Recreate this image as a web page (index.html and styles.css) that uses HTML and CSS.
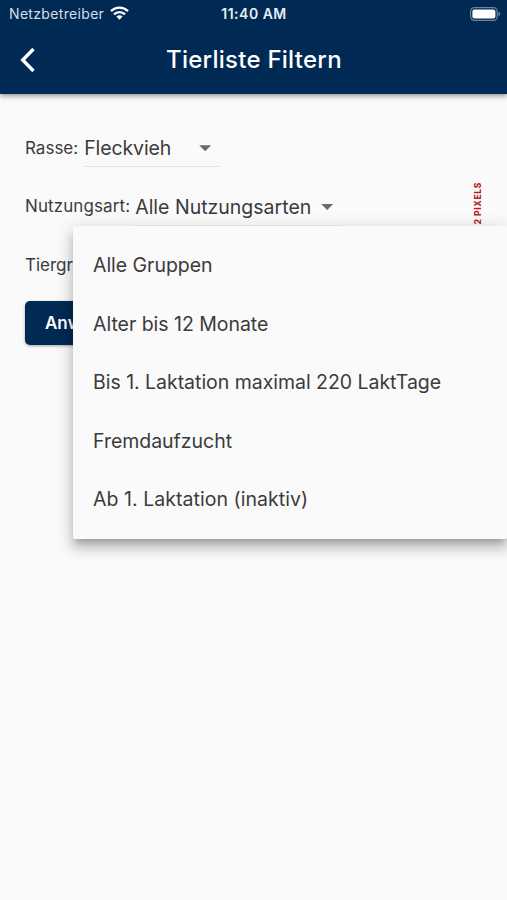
FILE: index.html
```html
<!DOCTYPE html>
<html lang="de">
<head>
<meta charset="utf-8">
<title>Tierliste Filtern</title>
<link rel="stylesheet" href="styles.css">
</head>
<body>
<header class="header">
  <div class="status">
    <div class="carrier"><span class="carrier-name">Netzbetreiber</span>
      <svg class="wifi" width="19" height="14" viewBox="0 0 19 14" fill="none" stroke="#fff" stroke-width="2.4"><path d="M1 5.1a12.2 12.2 0 0 1 17 0M4 8.4a7.8 7.8 0 0 1 11 0"/><path d="M9.5 13.7 6.4 10.6a4.4 4.4 0 0 1 6.2 0z" fill="#fff" stroke="none"/></svg>
    </div>
    <span class="time">11:40 AM</span>
    <svg class="battery" width="31" height="14" viewBox="0 0 31 14"><rect x=".6" y=".6" width="26.6" height="12.8" rx="3.8" fill="none" stroke="#718397" stroke-width="1.2"/><rect x="2.4" y="2.4" width="23" height="9.2" rx="2" fill="#fff"/><path d="M28.4 4.7q1.9.8 1.9 2.3t-1.9 2.3z" fill="#718397"/></svg>
  </div>
  <div class="bar">
    <svg class="back" width="16" height="26" viewBox="0 0 16 26" fill="none" stroke="#fff" stroke-width="3.4"><path d="M14.5 2 3.7 13l10.8 11"/></svg>
    <h1 class="title">Tierliste Filtern</h1>
  </div>
</header>
<main class="form">
  <div class="row"><span class="label">Rasse:</span>
    <div class="select race"><span class="value">Fleckvieh</span><i class="caret"></i></div></div>
  <div class="row"><span class="label label-use">Nutzungsart:</span>
    <div class="select use"><span class="value">Alle Nutzungsarten</span><i class="caret"></i></div></div>
  <div class="row"><span class="label">Tiergr</span></div>
  <button class="apply">Anw</button>
  <span class="overflow">2 PIXELS</span>
  <ul class="menu">
    <li>Alle Gruppen</li>
    <li>Alter bis 12 Monate</li>
    <li>Bis 1. Laktation maximal 220 LaktTage</li>
    <li>Fremdaufzucht</li>
    <li><span class="wide">Ab 1. Laktation (inaktiv)</span></li>
  </ul>
</main>
</body>
</html>
```
FILE: styles.css
```css
* { box-sizing: border-box; }
body { margin: 0; height: 900px; overflow: hidden; background: #fafafa; color: #3b3b3b; font-family: Inter, "Liberation Sans", sans-serif; }
.header { position: relative; height: 93.5px; background: #002a54; color: #fff; box-shadow: 0 2px 5px rgba(0,0,0,.42); }
.status { display: grid; grid-template-columns: 1fr auto 1fr; align-items: center; height: 27px; padding: 0 6px 0 9px; }
.carrier { display: flex; align-items: center; gap: 6px; font-size: 14px; color: #d5dee8; letter-spacing: .33px; }
.wifi { margin-top: -2px; }
.time { margin-left: -2px; font-size: 14px; font-weight: 600; letter-spacing: .5px; color: #e6ecf2; }
.battery { justify-self: end; }
.bar { display: flex; align-items: center; height: 66px; padding-left: 19px; }
.title { margin: 0 0 0 131px; font-size: 24px; font-weight: 500; line-height: 30px; letter-spacing: .25px; white-space: nowrap; }
.form { position: relative; height: 806px; padding: 25px 25px 0; }
.row { display: flex; align-items: center; height: 58.6px; white-space: nowrap; }
.label { font-size: 17px; }
.label-use { letter-spacing: .1px; }
.select { display: flex; align-items: center; justify-content: space-between; height: 39px; padding-right: 9px; border-bottom: 1px solid #e1e1e1; font-size: 19.5px; }
.race { width: 136px; margin-left: 6px; }
.race .value { letter-spacing: -.1px; }
.value { position: relative; top: 1px; }
.use { width: 207px; margin-left: 5px; padding-right: 9px; border-color: #ececec; }
.caret { width: 12px; height: 6px; margin-top: 2px; background: #6b6b6b; clip-path: polygon(0 0, 100% 0, 50% 100%); }
.apply { display: block; width: 130px; height: 44px; margin-top: 6.8px; padding: 0 0 0 20px; border: 0; border-radius: 5px; background: #002a54; box-shadow: 0 1px 3px rgba(0,0,0,.35); color: #fff; font: 600 17px Inter, sans-serif; text-align: left; }
.overflow { position: absolute; top: 88px; left: 472px; writing-mode: vertical-rl; transform: rotate(180deg); color: #b71c28; font-size: 8.5px; font-weight: 800; line-height: 12px; letter-spacing: .65px; }
.menu { position: absolute; top: 132.5px; left: 73px; width: 434px; height: 312.5px; margin: 0; padding: 9.75px 0; border-radius: 2px; background: #fafafa; box-shadow: 0 6px 6px -3px rgba(0,0,0,.2), 0 10px 12px 1px rgba(0,0,0,.14), 0 4px 17px 3px rgba(0,0,0,.12); list-style: none; }
.menu li { display: flex; align-items: center; height: 58.6px; padding-left: 20px; font-size: 19.5px; letter-spacing: -.03px; white-space: nowrap; }
.wide { letter-spacing: .05px; }
```
